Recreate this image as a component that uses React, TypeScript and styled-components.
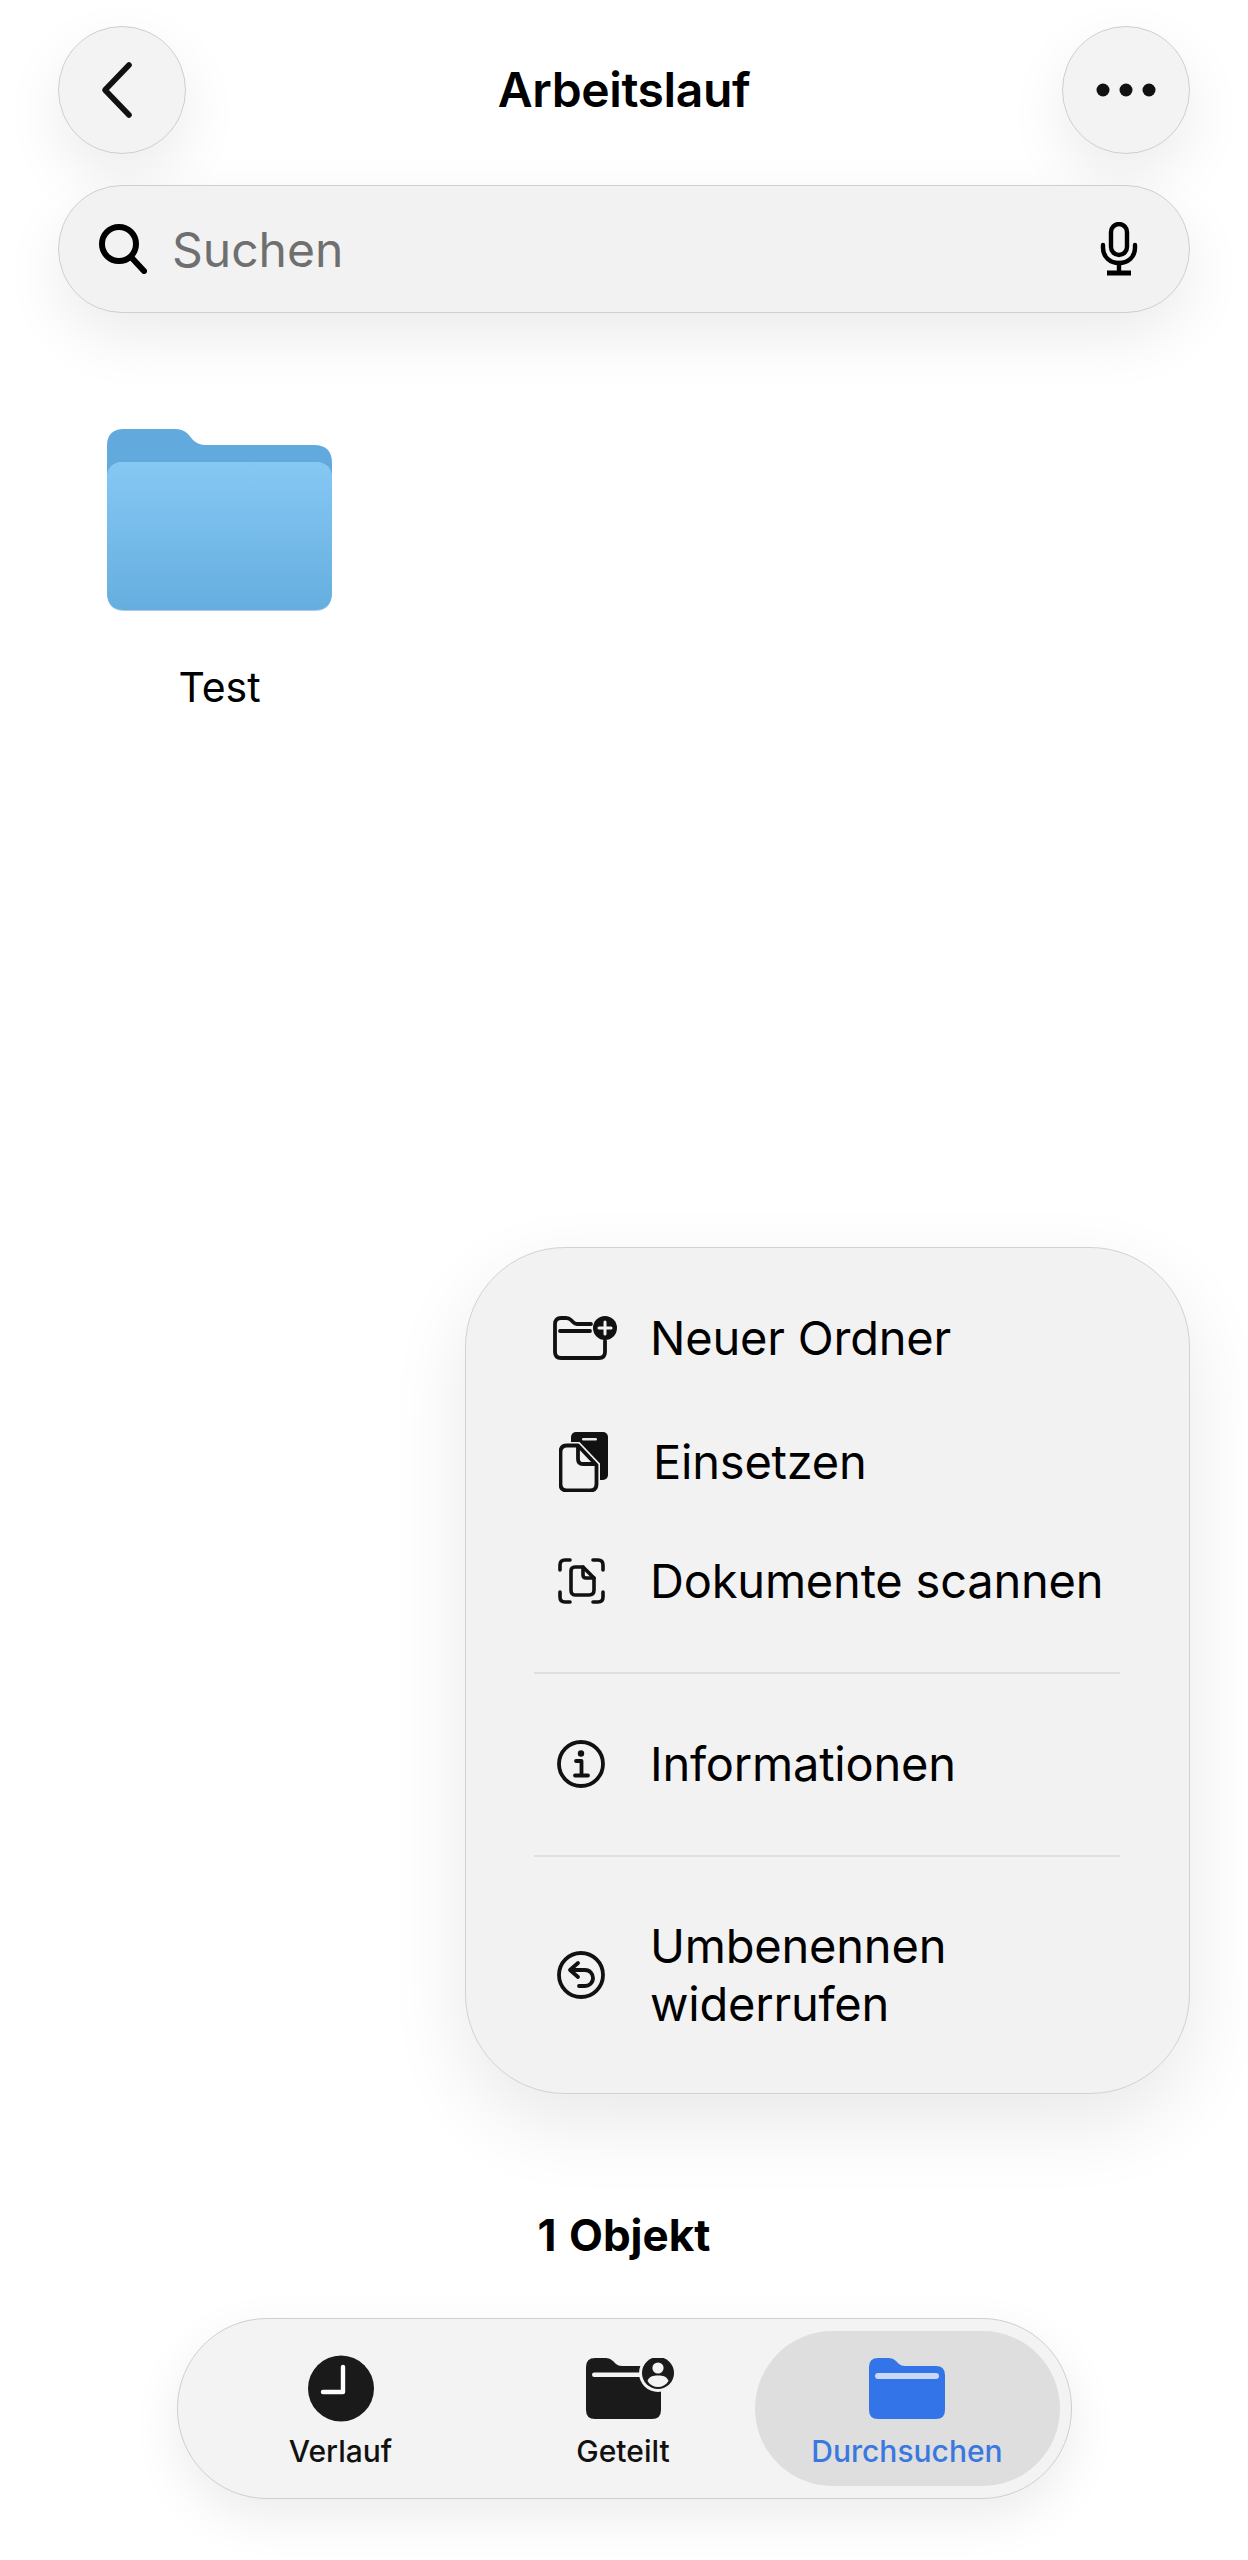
import React from "react";
import styled, { createGlobalStyle } from "styled-components";

const Global = createGlobalStyle`
  html, body { margin: 0; padding: 0; background: #fff; }
  * { box-sizing: border-box; }
  body { font-family: Inter, "Liberation Sans", sans-serif; color: #000; }
`;

const Page = styled.div`
  width: 1248px;
  height: 2560px;
  display: flex;
  flex-direction: column;
  padding: 25px 58px 61px;
  background: #fff;
  overflow: hidden;
`;

const Header = styled.header`
  display: flex;
  align-items: center;
  justify-content: space-between;
  height: 129px;
`;

const RoundButton = styled.div`
  width: 128px;
  height: 128px;
  border-radius: 50%;
  background: #f3f3f3;
  border: 1.5px solid #cfcfcf;
  box-shadow: 0 24px 60px rgba(0, 0, 0, 0.08);
  display: flex;
  align-items: center;
  justify-content: center;
  svg { display: block; }
`;

const Title = styled.h1`
  margin: 0;
  font-size: 48px;
  font-weight: 600;
  letter-spacing: -0.4px;
  line-height: 56px;
`;

const SearchBar = styled.div`
  margin-top: 31px;
  height: 128px;
  border-radius: 64px;
  background: #f2f2f2;
  border: 1.5px solid #cfcfcf;
  box-shadow: 0 24px 60px rgba(0, 0, 0, 0.08);
  display: flex;
  align-items: center;
  padding: 0 51px 0 40px;
`;

const SearchLabel = styled.span`
  flex: 1;
  margin: 2px 0 0 25px;
  font-size: 48px;
  color: #6f6f6f;
  line-height: 56px;
`;

const FolderTile = styled.div`
  margin: 116px 0 0 49px;
  width: 225px;
  display: flex;
  flex-direction: column;
  align-items: center;
`;

const FolderName = styled.span`
  margin-top: 51px;
  font-size: 41px;
  line-height: 50px;
`;

const Menu = styled.section`
  margin-top: auto;
  align-self: flex-end;
  width: 725px;
  height: 847px;
  border-radius: 100px;
  background: #f2f2f2;
  border: 1.5px solid #d2d2d2;
  box-shadow: 0 30px 80px rgba(0, 0, 0, 0.09);
  padding: 28px 69px 0 68px;
`;

const Row = styled.div<{ $h: number; $shift?: number }>`
  height: ${(p) => p.$h}px;
  display: flex;
  align-items: center;
  gap: ${(p) => 22 + (p.$shift ?? 0)}px;
`;

const IconSlot = styled.div<{ $dx?: number }>`
  width: 94px;
  flex: none;
  display: flex;
  justify-content: center;
  padding-left: ${(p) => p.$dx ?? 0}px;
  svg { display: block; }
`;

const RowLabel = styled.span`
  font-size: 47px;
  line-height: 58px;
  letter-spacing: -0.2px;
`;

const Divider = styled.hr<{ $top: number }>`
  margin: ${(p) => p.$top}px 0 0;
  border: none;
  height: 2px;
  background: #dfdfdf;
`;

const Count = styled.div`
  margin-top: 117px;
  text-align: center;
  font-size: 44px;
  font-weight: 700;
  line-height: 48px;
  word-spacing: 2px;
`;

const TabBar = styled.nav`
  margin-top: 59px;
  align-self: center;
  width: 895px;
  height: 181px;
  border-radius: 90px;
  background: #f3f3f3;
  border: 1.5px solid #cfcfcf;
  box-shadow: 0 18px 50px rgba(0, 0, 0, 0.08);
  padding: 12px 10px 12px 12px;
  display: grid;
  grid-template-columns: 302px 263px 305px;
  flex: none;
`;

const Tab = styled.div<{ $active?: boolean }>`
  height: 155px;
  border-radius: 78px;
  background: ${(p) => (p.$active ? "#dedede" : "transparent")};
  color: ${(p) => (p.$active ? "#3a78e0" : "#111")};
  display: flex;
  flex-direction: column;
  align-items: center;
  padding-top: 24px;
`;

const TabIcon = styled.div<{ $dx?: number }>`
  height: 66px;
  display: flex;
  align-items: center;
  margin-left: ${(p) => p.$dx ?? 0}px;
  svg { display: block; }
`;

const TabLabel = styled.span`
  margin-top: 12px;
  font-size: 30px;
  font-weight: 500;
  line-height: 36px;
`;

const Back = () => (
  <svg width="34" height="58" viewBox="0 0 34 58" style={{ marginRight: 10 }} fill="none" stroke="#111" strokeWidth="5.6" strokeLinecap="round" strokeLinejoin="round">
    <path d="M29 4 L5 29 L29 54" />
  </svg>
);
const Dots = () => (
  <svg width="60" height="14" viewBox="0 0 60 14" fill="#111">
    <circle cx="7" cy="7" r="6.5" /><circle cx="30" cy="7" r="6.5" /><circle cx="53" cy="7" r="6.5" />
  </svg>
);
const Loupe = () => (
  <svg width="48" height="50" viewBox="0 0 48 50" fill="none" stroke="#000" strokeWidth="6" strokeLinecap="round">
    <circle cx="20" cy="20" r="17" /><path d="M32 33 L45 47" />
  </svg>
);
const Mic = () => (
  <svg width="38" height="54" viewBox="0 0 38 54" fill="none" stroke="#000" strokeWidth="4.4" strokeLinecap="round">
    <rect x="11" y="2" width="16" height="31" rx="8" />
    <path d="M3 23 V26 C3 35 10 41 19 41 C28 41 35 35 35 26 V23" />
    <path d="M19 41 V50" />
    <path d="M7 51 H31" strokeWidth="5" strokeLinecap="butt" />
  </svg>
);
const Folder = () => (
  <svg width="225" height="182" viewBox="0 0 225 182">
    <defs>
      <linearGradient id="front" x1="0" y1="0" x2="0" y2="1">
        <stop offset="0" stopColor="#86c8f4" />
        <stop offset="1" stopColor="#65aedf" />
      </linearGradient>
    </defs>
    <path d="M17 0 H68 Q76 0 81 5 L86 11 Q91 16 99 16 H207 Q225 16 225 34 V90 H0 V17 Q0 0 17 0 Z" fill="#62aade" />
    <path d="M0 50 Q0 33 17 33 H207 Q225 33 225 50 V164 Q225 182 207 182 H18 Q0 182 0 164 Z" fill="#a9cde6" />
    <path d="M0 50 Q0 33 17 33 H207 Q225 33 225 50 V163 Q225 181 207 181 H18 Q0 181 0 163 Z" fill="url(#front)" />
  </svg>
);
const NewFolderIcon = () => (
  <svg width="64" height="44" viewBox="0 0 64 44" fill="none" stroke="#111" strokeWidth="3.8" strokeLinecap="round" strokeLinejoin="round">
    <path d="M38 8 H24 Q22 8 20 6 L18 4 Q16 2 13 2 H8 Q2 2 2 8 V36 Q2 42 8 42 H46 Q52 42 52 36 V25" />
    <path d="M7 15 H37" />
    <circle cx="52" cy="12" r="12" fill="#111" stroke="none" />
    <path d="M46 12 H58 M52 6 V18" stroke="#f2f2f2" strokeWidth="3" />
  </svg>
);
const PasteIcon = () => (
  <svg width="50" height="60" viewBox="0 0 50 60" fill="none">
    <rect x="12" y="0" width="37" height="48" rx="5" fill="#111" />
    <rect x="23" y="6" width="15" height="2.6" rx="1.3" fill="#e8e8e8" />
    <path d="M8 13.5 H19 L37.5 33 V52 Q37.5 58.5 31 58.5 H8 Q1.5 58.5 1.5 52 V20 Q1.5 13.5 8 13.5 Z" fill="#f2f2f2" stroke="#f2f2f2" strokeWidth="7" />
    <path d="M8 13.5 H19 L37.5 33 V52 Q37.5 58.5 31 58.5 H8 Q1.5 58.5 1.5 52 V20 Q1.5 13.5 8 13.5 Z" fill="#f2f2f2" stroke="#111" strokeWidth="3.8" strokeLinejoin="round" />
    <path d="M19 14 V27 Q19 32 24 32 H37" stroke="#111" strokeWidth="3.8" />
  </svg>
);
const ScanIcon = () => (
  <svg width="47" height="46" viewBox="0 0 47 46" fill="none" stroke="#111" strokeWidth="3.6" strokeLinecap="round" strokeLinejoin="round">
    <path d="M12 2 H7 Q2 2 2 7 V12" /><path d="M35 2 H40 Q45 2 45 7 V12" />
    <path d="M2 34 V39 Q2 44 7 44 H12" /><path d="M45 34 V39 Q45 44 40 44 H35" />
    <path d="M17 9 H25 L36 20 V32 Q36 37 31 37 H17 Q13 37 13 32 V13 Q13 9 17 9 Z" />
    <path d="M25 9 V17 Q25 20 28 20 H36" />
  </svg>
);
const InfoIcon = () => (
  <svg width="48" height="48" viewBox="0 0 48 48" fill="none" stroke="#111" strokeWidth="3.8" strokeLinecap="round" strokeLinejoin="round">
    <circle cx="24" cy="24" r="22" />
    <circle cx="24" cy="13.5" r="3.2" fill="#111" stroke="none" />
    <path d="M19 21 H24.5 V35 M18 35.5 H31" />
  </svg>
);
const UndoIcon = () => (
  <svg width="48" height="48" viewBox="0 0 48 48" fill="none" stroke="#111" strokeWidth="3.8" strokeLinecap="round" strokeLinejoin="round">
    <circle cx="24" cy="24" r="22" />
    <path d="M21 12 L13 19 L21 26" />
    <path d="M14 19 H28 C33 19 36 23 36 27 C36 32 32 35 28 35 H22" />
  </svg>
);
const ClockIcon = () => (
  <svg width="66" height="67" viewBox="0 0 66 67">
    <circle cx="33" cy="33.5" r="33" fill="#1a1a1a" />
    <path d="M35 12 V37 H15" fill="none" stroke="#fff" strokeWidth="4.4" strokeLinecap="round" strokeLinejoin="round" />
  </svg>
);
const SharedIcon = () => (
  <svg width="88" height="61" viewBox="0 0 88 61">
    <path d="M9 0 H20 Q24 0 27 3 L30 6 Q32 8 36 8 H66 Q75 8 75 17 V52 Q75 61 66 61 H9 Q0 61 0 52 V9 Q0 0 9 0 Z" fill="#1a1a1a" />
    <rect x="6" y="14.5" width="50" height="4.4" rx="2.2" fill="#f3f3f3" />
    <circle cx="72" cy="15" r="19" fill="#f3f3f3" />
    <circle cx="72" cy="15" r="16" fill="#1a1a1a" />
    <circle cx="72" cy="10" r="5.6" fill="#f3f3f3" />
    <path d="M61.5 23 C63 18.5 67 17.5 72 17.5 C77 17.5 81 18.5 82.5 23 C80 27 76 29 72 29 C68 29 64 27 61.5 23 Z" fill="#f3f3f3" />
  </svg>
);
const BrowseIcon = () => (
  <svg width="76" height="61" viewBox="0 0 76 61">
    <path d="M9 0 H20 Q24 0 27 3 L30 6 Q32 8 36 8 H67 Q76 8 76 17 V52 Q76 61 67 61 H9 Q0 61 0 52 V9 Q0 0 9 0 Z" fill="#3375e8" />
    <rect x="6" y="15" width="64" height="6" rx="3" fill="#c9d9f5" />
  </svg>
);

export default function App() {
  return (
    <Page>
      <Global />
      <Header>
        <RoundButton><Back /></RoundButton>
        <Title>Arbeitslauf</Title>
        <RoundButton><Dots /></RoundButton>
      </Header>
      <SearchBar>
        <Loupe />
        <SearchLabel>Suchen</SearchLabel>
        <Mic />
      </SearchBar>
      <FolderTile>
        <Folder />
        <FolderName>Test</FolderName>
      </FolderTile>
      <Menu>
        <Row $h={124}><IconSlot $dx={8}><NewFolderIcon /></IconSlot><RowLabel>Neuer Ordner</RowLabel></Row>
        <Row $h={124} $shift={3}><IconSlot $dx={6}><PasteIcon /></IconSlot><RowLabel>Einsetzen</RowLabel></Row>
        <Row $h={113}><IconSlot><ScanIcon /></IconSlot><RowLabel>Dokumente scannen</RowLabel></Row>
        <Divider $top={35} />
        <Row $h={179}><IconSlot><InfoIcon /></IconSlot><RowLabel>Informationen</RowLabel></Row>
        <Divider $top={2} />
        <Row $h={236}><IconSlot><UndoIcon /></IconSlot><RowLabel>Umbenennen widerrufen</RowLabel></Row>
      </Menu>
      <Count>1 Objekt</Count>
      <TabBar>
        <Tab><TabIcon><ClockIcon /></TabIcon><TabLabel>Verlauf</TabLabel></Tab>
        <Tab><TabIcon $dx={13}><SharedIcon /></TabIcon><TabLabel>Geteilt</TabLabel></Tab>
        <Tab $active><TabIcon><BrowseIcon /></TabIcon><TabLabel>Durchsuchen</TabLabel></Tab>
      </TabBar>
    </Page>
  );
}
